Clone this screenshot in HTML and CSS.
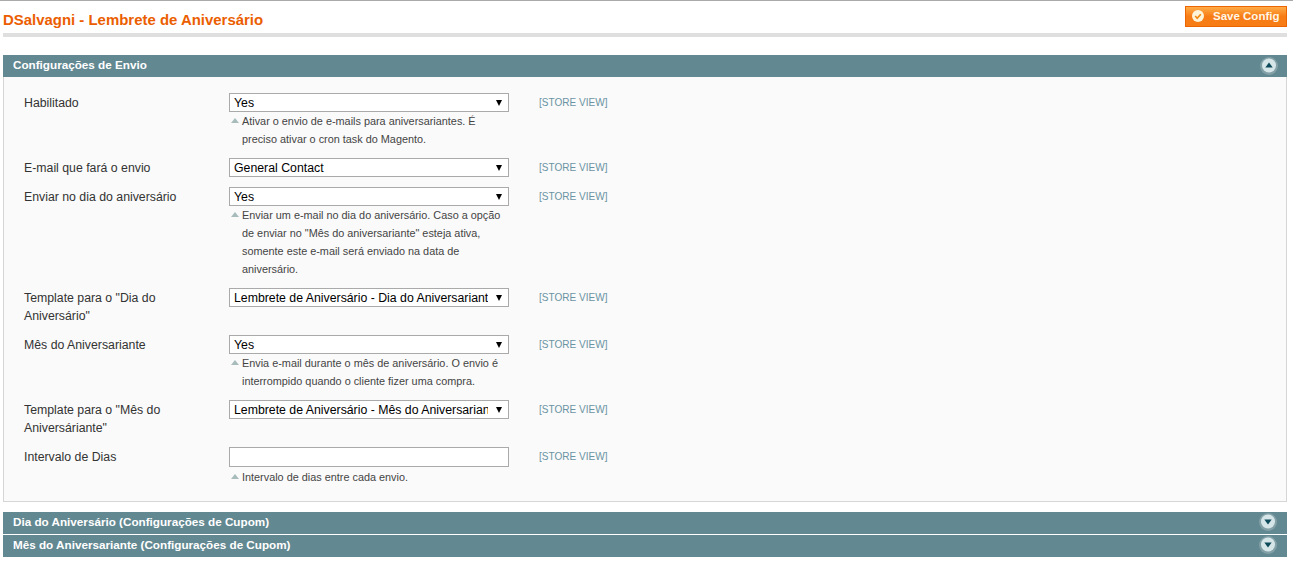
FILE: index.html
```html
<!DOCTYPE html>
<html lang="pt">
<head>
<meta charset="utf-8">
<title>DSalvagni - Lembrete de Aniversário</title>
<link rel="stylesheet" href="styles.css">
</head>
<body>
<header class="page-head">
  <h1 class="page-title">DSalvagni - Lembrete de Aniversário</h1>
  <button class="save-btn" type="button">
    <svg class="save-icon" width="12" height="12" viewBox="0 0 12 12"><circle cx="6" cy="6" r="6" fill="#fff3d9"/><path d="M3.2 6l2 2.2 3.6-4" fill="none" stroke="#f28a12" stroke-width="1.7"/></svg>
    <span>Save Config</span>
  </button>
</header>

<section class="section">
  <div class="bar">
    <span>Configurações de Envio</span>
    <svg class="toggle" width="18" height="18" viewBox="0 0 18 18"><circle cx="9" cy="9" r="9" fill="#83a0a7"/><circle cx="9" cy="8.5" r="7" fill="#d5e5e8"/><path d="M9 5.5l3.7 5H5.3z" fill="#0f4a5a"/></svg>
  </div>
  <div class="panel">
    <div class="row">
      <div class="label">Habilitado</div>
      <div class="value">
        <div class="select"><span class="select-text">Yes</span><i class="arrow"></i></div>
        <p class="note">Ativar o envio de e-mails para aniversariantes. É preciso ativar o cron task do Magento.</p>
      </div>
      <div class="scope">[STORE VIEW]</div>
    </div>
    <div class="row">
      <div class="label">E-mail que fará o envio</div>
      <div class="value">
        <div class="select"><span class="select-text">General Contact</span><i class="arrow"></i></div>
      </div>
      <div class="scope">[STORE VIEW]</div>
    </div>
    <div class="row">
      <div class="label">Enviar no dia do aniversário</div>
      <div class="value">
        <div class="select"><span class="select-text">Yes</span><i class="arrow"></i></div>
        <p class="note">Enviar um e-mail no dia do aniversário. Caso a opção de enviar no "Mês do aniversariante" esteja ativa, somente este e-mail será enviado na data de aniversário.</p>
      </div>
      <div class="scope">[STORE VIEW]</div>
    </div>
    <div class="row">
      <div class="label">Template para o "Dia do Aniversário"</div>
      <div class="value">
        <div class="select"><span class="select-text">Lembrete de Aniversário - Dia do Aniversariante</span><i class="arrow"></i></div>
      </div>
      <div class="scope">[STORE VIEW]</div>
    </div>
    <div class="row">
      <div class="label">Mês do Aniversariante</div>
      <div class="value">
        <div class="select"><span class="select-text">Yes</span><i class="arrow"></i></div>
        <p class="note">Envia e-mail durante o mês de aniversário. O envio é interrompido quando o cliente fizer uma compra.</p>
      </div>
      <div class="scope">[STORE VIEW]</div>
    </div>
    <div class="row">
      <div class="label">Template para o "Mês do Aniversáriante"</div>
      <div class="value">
        <div class="select"><span class="select-text">Lembrete de Aniversário - Mês do Aniversariante</span><i class="arrow"></i></div>
      </div>
      <div class="scope">[STORE VIEW]</div>
    </div>
    <div class="row">
      <div class="label">Intervalo de Dias</div>
      <div class="value">
        <input class="text-input" type="text">
        <p class="note">Intervalo de dias entre cada envio.</p>
      </div>
      <div class="scope">[STORE VIEW]</div>
    </div>
  </div>
</section>

<section class="section section-closed">
  <div class="bar">
    <span>Dia do Aniversário (Configurações de Cupom)</span>
    <svg class="toggle toggle-closed" width="18" height="18" viewBox="0 0 18 18"><circle cx="9" cy="9" r="9" fill="#83a0a7"/><circle cx="9" cy="8.5" r="7" fill="#d5e5e8"/><path d="M9 11.5l-3.7-5h7.4z" fill="#0f4a5a"/></svg>
  </div>
  <div class="bar bar-next">
    <span>Mês do Aniversariante (Configurações de Cupom)</span>
    <svg class="toggle toggle-closed" width="18" height="18" viewBox="0 0 18 18"><circle cx="9" cy="9" r="9" fill="#83a0a7"/><circle cx="9" cy="8.5" r="7" fill="#d5e5e8"/><path d="M9 11.5l-3.7-5h7.4z" fill="#0f4a5a"/></svg>
  </div>
</section>
</body>
</html>
```
FILE: styles.css
```css
* { box-sizing: border-box; }
html, body { margin: 0; padding: 0; }
body {
  height: 563px;
  overflow: hidden;
  padding: 0 6px 0 3px;
  background: #fff;
  border-top: 1px solid #aaa;
  font-family: "Liberation Sans", Arial, sans-serif;
  font-size: 12.3px;
  color: #2f2f2f;
}
.page-head {
  display: flex;
  justify-content: space-between;
  align-items: flex-start;
  height: 36px;
  padding-top: 5px;
  border-bottom: 4px solid #dfdfdf;
}
.page-title {
  margin: 0;
  padding-top: 6px;
  font-size: 14.95px;
  line-height: 16px;
  font-weight: bold;
  color: #eb5e00;
}
.save-btn {
  display: flex;
  align-items: center;
  gap: 9px;
  width: 102px;
  height: 21px;
  padding: 0 0 2px 6px;
  border: 1px solid #ed6502;
  background: linear-gradient(#ffac47, #f77c16 50%, #f77c16);
  color: #fff6e6;
  font: bold 11.5px "Liberation Sans", Arial, sans-serif;
}
.section { margin-top: 18px; }
.section-closed { margin-top: 10px; }
.bar {
  display: flex;
  align-items: center;
  justify-content: space-between;
  height: 22px;
  padding: 0 10px 3px;
  background: #628891;
  color: #fff;
  font-weight: bold;
  font-size: 11.7px;
}
.bar-next { margin-top: 1px; }
.toggle { flex: none; align-self: flex-start; margin: 2px -1px 0 0; }
.toggle-closed { margin: 1px 0 0 0; }
.panel {
  height: 425px;
  padding: 16px 20px 0;
  background: #fafafa;
  border: 1px solid #d6d6d6;
  border-top: 0;
}
.row {
  display: grid;
  grid-template-columns: 205px 280px 1fr;
  margin-bottom: 10px;
}
.label { padding: 1px 20px 0 0; line-height: 18px; color: #333; }
.value { min-width: 0; }
.scope {
  padding: 2px 0 0 30px;
  font-size: 10.05px;
  line-height: 15px;
  color: #6a94a3;
}
.select {
  display: flex;
  align-items: center;
  justify-content: space-between;
  height: 19px;
  padding: 0 6px 0 4px;
  background: #fff;
  border: 1px solid #aaa;
  color: #000;
}
.select-text {
  width: 254px;
  flex: none;
  overflow: hidden;
  white-space: nowrap;
}
.arrow {
  flex: none;
  width: 0;
  height: 0;
  border: 3.5px solid transparent;
  border-top: 6px solid #000;
  border-bottom: 0;
}
.text-input {
  display: block;
  width: 280px;
  height: 20px;
  margin: 0 0 1px;
  background: #fff;
  border: 1px solid #aaa;
}
.note {
  position: relative;
  margin: 0;
  padding: 0 6px 0 13px;
  font-size: 10.87px;
  line-height: 18px;
  color: #444;
}
.note::before {
  content: "";
  position: absolute;
  left: 2px;
  top: 6px;
  border: 4px solid transparent;
  border-bottom: 5px solid #a8bcbc;
  border-top: 0;
}
```
